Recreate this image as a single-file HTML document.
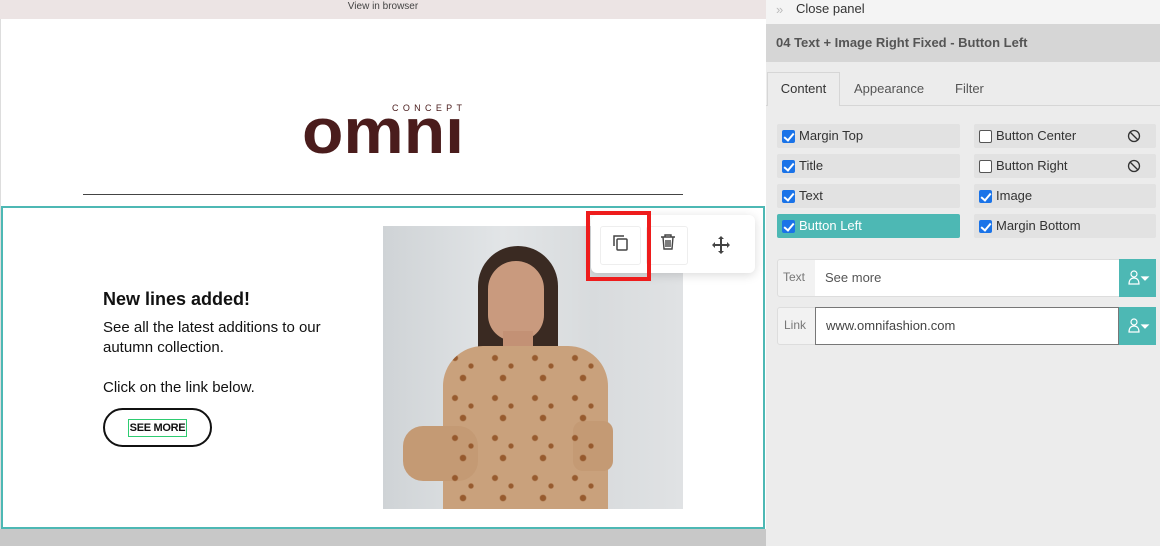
<!DOCTYPE html>
<html><head><meta charset="utf-8"><style>
*{box-sizing:border-box;margin:0;padding:0}
body{width:1160px;height:546px;overflow:hidden;font-family:"Liberation Sans",sans-serif;background:#ececec;position:relative}
.abs{position:absolute}
.cb{position:absolute;width:13px;height:13px;border-radius:2px}
.on{background:#1a73e8}
.on::after{content:"";position:absolute;left:4px;top:1px;width:4px;height:8px;border:solid #fff;border-width:0 2px 2px 0;transform:rotate(40deg)}
.off{background:#fff;border:1px solid #555}
.opt{position:absolute;height:24px;background:#e2e2e2;border-radius:2px;font-size:13px;color:#333;line-height:24px;padding-left:22px}
.opt .cb{left:5px;top:5.5px}
</style></head><body>
<div class="abs" style="left:0;top:0;width:766px;height:546px;background:#fff;border-left:1px solid #ddd"></div>
<div class="abs" style="left:0;top:0;width:766px;height:19px;background:#ece4e4;font-size:10px;color:#444;text-align:center;line-height:13px">View in browser</div>
<svg class="abs" style="left:0;top:0" width="766" height="200">
<text x="392" y="111" font-family="Liberation Sans" font-size="9" fill="#4a1c1c" textLength="70" lengthAdjust="spacing">CONCEPT</text>
<text x="302" y="153" font-family="Liberation Sans" font-weight="bold" font-size="64" fill="#4a1c1c" textLength="162" lengthAdjust="spacingAndGlyphs">omnı</text>
</svg>
<div class="abs" style="left:83px;top:194px;width:600px;height:1px;background:#444"></div>
<div class="abs" style="left:1px;top:206px;width:764px;height:323px;border:2px solid #4db8b4"></div>
<div class="abs" style="left:0;top:529px;width:766px;height:17px;background:#c8c8c8"></div>
<div class="abs" style="left:103px;top:289px;font-size:18px;font-weight:bold;color:#111">New lines added!</div>
<div class="abs" style="left:103px;top:318px;font-size:15px;color:#111;line-height:20px">See all the latest additions to our<br>autumn collection.<br><br>Click on the link below.</div>
<div class="abs" style="left:103px;top:408px;width:109px;height:39px;border:2px solid #111;border-radius:20px"></div>
<div class="abs" style="left:128px;top:419px;width:59px;height:18px;border:1px solid #2ecc71;font-size:11px;font-weight:bold;color:#111;line-height:16px;text-align:center;white-space:nowrap;letter-spacing:-0.3px">SEE MORE</div>
<div class="abs" style="left:383px;top:226px;width:300px;height:283px;background:linear-gradient(90deg,#cfd3d6,#e2e5e7 40%,#d8dbdd 70%,#e0e2e4);overflow:hidden">
 <div class="abs" style="left:95px;top:20px;width:80px;height:140px;background:#3a2a22;border-radius:40px 40px 10px 10px"></div>
 <div class="abs" style="left:105px;top:35px;width:56px;height:80px;background:#c99a7e;border-radius:28px 28px 26px 26px"></div>
 <div class="abs" style="left:120px;top:105px;width:30px;height:30px;background:#c39175"></div>
 <div class="abs" style="left:60px;top:120px;width:165px;height:200px;background:#c9a17c;border-radius:40px 40px 0 0"></div>
 <div class="abs" style="left:20px;top:200px;width:75px;height:55px;background:#c49a74;border-radius:20px"></div>
 <div class="abs" style="left:190px;top:195px;width:40px;height:50px;background:#c49a74;border-radius:10px"></div>
 <div class="abs" style="left:60px;top:120px;width:165px;height:200px;background:radial-gradient(circle at 30% 30%,#8b4a1c 6%,transparent 9%),radial-gradient(circle at 70% 50%,#8b4a1c 6%,transparent 9%),radial-gradient(circle at 50% 80%,#8b4a1c 7%,transparent 10%);background-size:40px 40px;opacity:.8;border-radius:40px 40px 0 0"></div>
</div>
<div class="abs" style="left:591px;top:215px;width:164px;height:58px;background:#fff;border-radius:6px;box-shadow:0 2px 10px rgba(0,0,0,.15)"></div>
<div class="abs" style="left:600px;top:226px;width:41px;height:39px;border:1px solid #eee;border-radius:3px"></div>
<div class="abs" style="left:646px;top:226px;width:42px;height:39px;border:1px solid #eee;border-radius:3px"></div>
<svg class="abs" style="left:611px;top:233px" width="20" height="20" viewBox="0 0 20 20" fill="none" stroke="#444" stroke-width="1.5"><path d="M3 13V3h10"/><rect x="6" y="6" width="10" height="11" rx="1"/></svg>
<svg class="abs" style="left:659px;top:233px" width="18" height="18" viewBox="0 0 18 18" fill="none" stroke="#444" stroke-width="1.4"><path d="M2 4h14M6 4V2h6v2M4 4l1 12h8l1-12M7 7v7M9 7v7M11 7v7"/></svg>
<svg class="abs" style="left:712px;top:236px" width="18" height="18" viewBox="0 0 18 18" fill="#444"><path d="M9 0l3 3h-2v5h5V6l3 3-3 3v-2h-5v5h2l-3 3-3-3h2v-5H3v2L0 9l3-3v2h5V3H6z"/></svg>
<div class="abs" style="left:586px;top:211px;width:65px;height:70px;border:4px solid #ee1c1c"></div>
<div class="abs" style="left:766px;top:0;width:394px;height:24px;background:#f4f4f4"></div>
<div class="abs" style="left:776px;top:2px;font-size:13px;color:#bbb">»</div>
<div class="abs" style="left:796px;top:1px;font-size:13px;color:#333">Close panel</div>
<div class="abs" style="left:766px;top:24px;width:394px;height:38px;background:#d6d6d6;font-size:13px;font-weight:bold;color:#555;line-height:37px;padding-left:10px">04 Text + Image Right Fixed - Button Left</div>
<div class="abs" style="left:766px;top:105px;width:394px;height:1px;background:#d6d6d6"></div>
<div class="abs" style="left:767px;top:72px;width:73px;height:34px;background:#ececec;border:1px solid #d6d6d6;border-bottom:none;font-size:13px;color:#333;text-align:center;line-height:32px">Content</div>
<div class="abs" style="left:854px;top:81px;font-size:13px;color:#555">Appearance</div>
<div class="abs" style="left:955px;top:81px;font-size:13px;color:#555">Filter</div>
<div class="opt" style="left:777px;top:124px;width:183px"><span class="cb on"></span>Margin Top</div>
<div class="opt" style="left:777px;top:154px;width:183px"><span class="cb on"></span>Title</div>
<div class="opt" style="left:777px;top:184px;width:183px"><span class="cb on"></span>Text</div>
<div class="opt" style="left:777px;top:214px;width:183px;background:#4db8b4;color:#fff"><span class="cb on"></span>Button Left</div>
<div class="opt" style="left:974px;top:124px;width:182px"><span class="cb off"></span>Button Center</div>
<div class="opt" style="left:974px;top:154px;width:182px"><span class="cb off"></span>Button Right</div>
<div class="opt" style="left:974px;top:184px;width:182px"><span class="cb on"></span>Image</div>
<div class="opt" style="left:974px;top:214px;width:182px"><span class="cb on"></span>Margin Bottom</div>
<svg class="abs" style="left:1127px;top:129px" width="14" height="14" viewBox="0 0 14 14" fill="none" stroke="#333" stroke-width="1.3"><circle cx="7" cy="7" r="5.5"/><path d="M3 3l8 8"/></svg>
<svg class="abs" style="left:1127px;top:159px" width="14" height="14" viewBox="0 0 14 14" fill="none" stroke="#333" stroke-width="1.3"><circle cx="7" cy="7" r="5.5"/><path d="M3 3l8 8"/></svg>
<div class="abs" style="left:777px;top:259px;width:379px;height:38px;background:#f2f2f2;border:1px solid #ddd;border-radius:3px"></div>
<div class="abs" style="left:783px;top:270px;font-size:12px;color:#777">Text</div>
<div class="abs" style="left:815px;top:260px;width:304px;height:36px;background:#fff;font-size:13px;color:#555;line-height:36px;padding-left:10px">See more</div>
<div class="abs" style="left:777px;top:307px;width:379px;height:38px;background:#f2f2f2;border:1px solid #ddd;border-radius:3px"></div>
<div class="abs" style="left:784px;top:318px;font-size:12px;color:#777">Link</div>
<div class="abs" style="left:815px;top:307px;width:304px;height:38px;background:#fff;border:1px solid #777;font-size:13px;color:#444;line-height:36px;padding-left:10px">www.omnifashion.com</div>
<div class="abs" style="left:1119px;top:259px;width:37px;height:38px;background:#4db8b4"></div>
<div class="abs" style="left:1119px;top:307px;width:37px;height:38px;background:#4db8b4"></div>
<svg class="abs" style="left:1127px;top:269px" width="24" height="18" viewBox="0 0 24 18" fill="none" stroke="#fff" stroke-width="1.2"><circle cx="7" cy="5" r="3"/><path d="M2 15c0-4 2-6 5-6s5 2 5 6z"/><path d="M15 8h6l-3 3z" fill="#fff"/></svg>
<svg class="abs" style="left:1127px;top:317px" width="24" height="18" viewBox="0 0 24 18" fill="none" stroke="#fff" stroke-width="1.2"><circle cx="7" cy="5" r="3"/><path d="M2 15c0-4 2-6 5-6s5 2 5 6z"/><path d="M15 8h6l-3 3z" fill="#fff"/></svg>
</body></html>
